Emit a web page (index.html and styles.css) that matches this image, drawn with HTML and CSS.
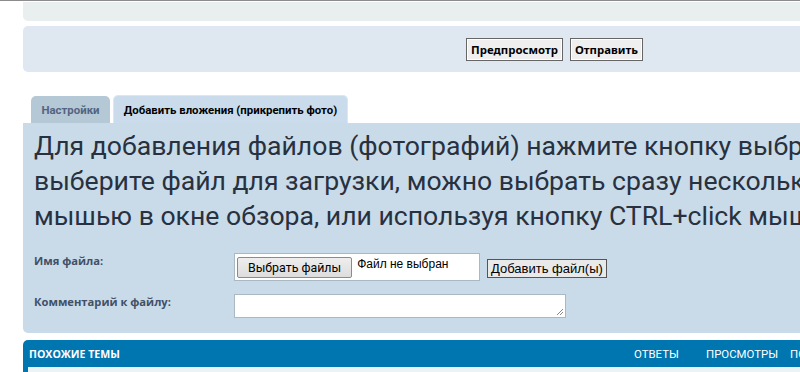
FILE: index.html
```html
<!DOCTYPE html>
<html lang="ru">
<head>
<meta charset="utf-8">
<link rel="stylesheet" href="styles.css">
</head>
<body>
<div class="topline"></div>
<div class="wrap">
  <div class="panel panel-top"></div>
  <div class="panel panel-submit">
    <button class="btn">Предпросмотр</button>
    <button class="btn">Отправить</button>
  </div>
  <div class="tabs">
    <div class="tab">Настройки</div>
    <div class="tab tab-active">Добавить вложения (прикрепить фото)</div>
  </div>
  <div class="panel panel-attach">
    <p class="intro">Для добавления файлов (фотографий) нажмите кнопку выбрать файлы и<br>выберите файл для загрузки, можно выбрать сразу несколько файлов, выделяя их<br>мышью в окне обзора, или используя кнопку CTRL+click мышью по файлам.</p>
    <div class="row">
      <div class="label">Имя файла:</div>
      <div class="field">
        <div class="filebox">
          <span class="filebtn">Выбрать файлы</span>
          <span class="filename">Файл не выбран</span>
        </div>
        <button class="addbtn">Добавить файл(ы)</button>
      </div>
    </div>
    <div class="row row-comment">
      <div class="label">Комментарий к файлу:</div>
      <div class="field">
        <div class="textarea"><svg class="grip" width="8" height="8" viewBox="0 0 8 8"><path d="M7 1L1 7M7 4L4 7" stroke="#888" stroke-width="1"/></svg></div>
      </div>
    </div>
  </div>
  <div class="topics">
    <div class="topics-head">
      <span class="topics-title">ПОХОЖИЕ ТЕМЫ</span>
      <span class="col col-replies">ОТВЕТЫ</span>
      <span class="col col-views">ПРОСМОТРЫ</span>
      <span class="col col-last">ПОСЛЕДНЕЕ СООБЩЕНИЕ</span>
    </div>
    <div class="topics-body"></div>
  </div>
</div>
</body>
</html>
```

FILE: styles.css
```css
html, body {
  margin: 0;
  padding: 0;
  overflow: hidden;
  background: #fff;
}
body {
  width: 800px;
  height: 372px;
  font-family: "Open Sans", "Noto Sans", sans-serif;
}
.topline {
  height: 1px;
  border-top: 1px solid #8c8c8c;
  width: 1200px;
}
.wrap {
  padding-left: 23px;
  width: 1063px;
}
.panel {
  border-radius: 5px;
}
.panel-top {
  height: 19px;
  background: #e9eeee;
  border-radius: 0 0 5px 5px;
  margin-bottom: 5px;
}
.panel-submit {
  height: 46px;
  background: #dfe8f0;
  display: flex;
  justify-content: center;
  align-items: center;
  gap: 7px;
}
.btn {
  font-family: "Noto Sans", sans-serif;
  font-weight: bold;
  font-size: 11.4px;
  color: #000;
  background: #efefef;
  border: 1px solid #666;
  box-shadow: inset 0 0 0 1px #fff;
  height: 23px;
  padding: 0 4px;
  margin: 0;
}
.tabs {
  display: flex;
  gap: 3px;
  padding-left: 8px;
  margin-top: 23px;
  height: 28px;
  align-items: flex-end;
}
.tab {
  height: 27px;
  width: 79px;
  background: #b5c8d5;
  border-radius: 5px 5px 0 0;
  font-size: 11.4px;
  font-weight: bold;
  color: #536482;
  display: flex;
  align-items: center;
  justify-content: center;
  font-family: "Roboto", sans-serif;
}
.tab-active {
  width: 233px;
  height: 27px;
  background: #cadceb;
  color: #000;
  border: 1px solid #dbe8f1;
  border-bottom: none;
}
.panel-attach {
  background: #c9dbe8;
  height: 210px;
  border-radius: 0 5px 5px 5px;
  padding: 5px 0 0 11px;
  box-sizing: border-box;
  overflow: hidden;
}
.intro {
  margin: 0;
  font-family: "Roboto", sans-serif;
  font-size: 26.6px;
  line-height: 35px;
  color: #28313f;
  white-space: nowrap;
}
.row {
  display: flex;
  margin-top: 20px;
}
.row-comment {
  margin-top: 13px;
}
.label {
  width: 200px;
  font-size: 11.2px;
  font-weight: bold;
  color: #425067;
  padding-top: 0;
}
.field {
  display: flex;
  align-items: center;
  gap: 6px;
}
.filebox {
  background: #fff;
  border: 1px solid #a9b8c2;
  display: flex;
  align-items: flex-start;
  padding: 3px 0 0 2px;
  box-sizing: border-box;
  height: 28px;
  width: 246px;
}
.filebtn {
  font-family: "Roboto", sans-serif;
  font-size: 12.4px;
  color: #000;
  background: linear-gradient(#eee, #ddd);
  border: 1px solid #8b8b8b;
  border-radius: 2px;
  height: 19px;
  line-height: 19px;
  padding: 0 10px;
}
.filename {
  font-family: "Liberation Sans", sans-serif;
  font-size: 12px;
  color: #000;
  margin-left: 5px;
  margin-top: 0;
}
.addbtn {
  font-family: "Liberation Sans", sans-serif;
  font-size: 13px;
  color: #000;
  background: #e9e9e9;
  border: 1px solid #555;
  padding: 0 3px;
  height: 19px;
  margin: 2px 0 0 1px;
}
.textarea {
  width: 332px;
  height: 24px;
  background: #fff;
  border: 1px solid #a9b8c2;
  box-sizing: border-box;
  position: relative;
}
.grip {
  position: absolute;
  right: 1px;
  bottom: 1px;
}
.topics {
  margin-top: 7px;
  background: #0076b1;
  border-radius: 5px 5px 0 0;
  padding: 0 0 0 5px;
  height: 40px;
}
.topics-head {
  height: 27px;
  display: flex;
  align-items: center;
  font-size: 10.6px;
  color: #fff;
}
.topics-title {
  font-weight: bold;
  width: 605px;
  padding-left: 1px;
}
.col {
  font-family: "Roboto", sans-serif;
  font-size: 11.4px;
}
.col-replies {
  width: 72px;
}
.col-views {
  width: 84px;
}
.topics-body {
  background: #ecf3f7;
  height: 13px;
}
```
